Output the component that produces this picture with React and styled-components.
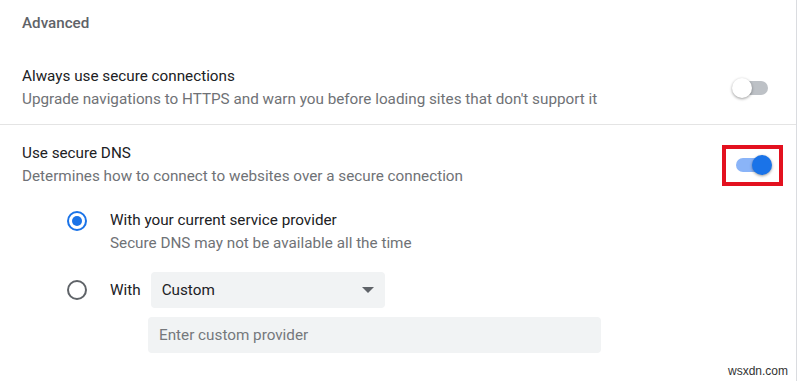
import React from "react";
import styled, { createGlobalStyle } from "styled-components";

const GlobalStyle = createGlobalStyle`
  html, body {
    margin: 0;
    padding: 0;
    background: #ffffff;
  }
  body {
    font-family: Roboto, "Noto Sans", Arial, sans-serif;
  }
`;

const Page = styled.div`
  width: 800px;
  height: 381px;
  display: flex;
  background: #fff;
  overflow: hidden;
  position: relative;
`;

const Panel = styled.div`
  width: 796px;
  border-right: 1px solid #dadce0;
  display: flex;
  flex-direction: column;
`;

const SectionTitle = styled.div`
  padding: 14px 22px 0;
  height: 43px;
  box-sizing: border-box;
  font-size: 15.2px;
  font-weight: 500;
  color: #5f6368;
`;

const Row = styled.div`
  display: flex;
  align-items: center;
  justify-content: space-between;
  padding: ${(p) => p.$pad || "0 22px"};
  height: ${(p) => p.$height}px;
  box-sizing: border-box;
  border-bottom: ${(p) => (p.$divider ? "1px solid #e4e4e4" : "none")};
`;

const TextCol = styled.div`
  display: flex;
  flex-direction: column;
  gap: 5px;
`;

const Label = styled.div`
  font-size: 15.25px;
  color: #202124;
  margin-left: ${(p) => p.$ml || 0}px;
`;

const Sub = styled.div`
  font-size: 15.25px;
  color: #6f7276;
`;

const Toggle = styled.div`
  position: relative;
  width: 34px;
  height: 14px;
  border-radius: 7px;
  background: ${(p) => (p.$on ? "#8ab4f8" : "#bdc1c6")};
  margin-right: ${(p) => p.$mr || 0}px;
  &::after {
    content: "";
    position: absolute;
    top: -3px;
    left: ${(p) => (p.$on ? "16px" : "-2px")};
    width: 20px;
    height: 20px;
    border-radius: 50%;
    background: ${(p) => (p.$on ? "#1a73e8" : "#ffffff")};
    box-shadow: 0 1px 3px rgba(0, 0, 0, 0.4);
  }
`;

const Highlight = styled.div`
  width: 61px;
  height: 41px;
  box-sizing: border-box;
  border: 4px solid #e3111f;
  display: flex;
  align-items: center;
  justify-content: center;
  margin-top: 1px;
`;

const Options = styled.div`
  display: flex;
  flex-direction: column;
  padding-left: 67px;
  margin-top: 7px;
`;

const OptionRow = styled.div`
  display: flex;
  align-items: flex-start;
  gap: 23px;
  margin-top: ${(p) => p.$mt || 0}px;
`;

const Radio = styled.div`
  width: 20px;
  height: 20px;
  box-sizing: border-box;
  border-radius: 50%;
  border: 2px solid ${(p) => (p.$checked ? "#1a73e8" : "#5f6368")};
  display: flex;
  align-items: center;
  justify-content: center;
  flex-shrink: 0;
  &::after {
    content: "";
    width: 10px;
    height: 10px;
    border-radius: 50%;
    background: ${(p) => (p.$checked ? "#1a73e8" : "transparent")};
  }
`;

const CustomCol = styled.div`
  display: flex;
  flex-direction: column;
  gap: 9px;
`;

const SelectLine = styled.div`
  display: flex;
  align-items: center;
  gap: 10px;
`;

const Select = styled.div`
  width: 234px;
  height: 36px;
  border-radius: 4px;
  background: #f1f3f4;
  box-sizing: border-box;
  padding: 0 11px;
  display: flex;
  align-items: center;
  justify-content: space-between;
  font-size: 15.25px;
  color: #202124;
`;

const Caret = styled.div`
  width: 0;
  height: 0;
  border-left: 6px solid transparent;
  border-right: 6px solid transparent;
  border-top: 6px solid #5f6368;
`;

const Input = styled.div`
  margin-left: 81px;
  width: 453px;
  height: 36px;
  border-radius: 4px;
  background: #f1f3f4;
  box-sizing: border-box;
  padding: 0 11px;
  display: flex;
  align-items: center;
  font-size: 15.25px;
  color: #75787c;
`;

const Watermark = styled.div`
  position: absolute;
  right: 12px;
  bottom: 3px;
  font-family: "Liberation Sans", Arial, sans-serif;
  font-size: 12px;
  color: #333;
`;

export default function App() {
  return (
    <Page>
      <GlobalStyle />
      <Panel>
        <SectionTitle>Advanced</SectionTitle>
        <Row $height={82} $pad="8px 22px 0" $divider>
          <TextCol>
            <Label>Always use secure connections</Label>
            <Sub>Upgrade navigations to HTTPS and warn you before loading sites that don't support it</Sub>
          </TextCol>
          <Toggle $mr={6} />
        </Row>
        <Row $height={79} $pad="0 13px 0 22px">
          <TextCol>
            <Label>Use secure DNS</Label>
            <Sub>Determines how to connect to websites over a secure connection</Sub>
          </TextCol>
          <Highlight>
            <Toggle $on />
          </Highlight>
        </Row>
        <Options>
          <OptionRow>
            <Radio $checked />
            <TextCol>
              <Label>With your current service provider</Label>
              <Sub>Secure DNS may not be available all the time</Sub>
            </TextCol>
          </OptionRow>
          <OptionRow $mt={20}>
            <CustomCol>
              <SelectLine>
                <Radio />
                <Label $ml={13}>With</Label>
                <Select>
                  Custom
                  <Caret />
                </Select>
              </SelectLine>
              <Input>Enter custom provider</Input>
            </CustomCol>
          </OptionRow>
        </Options>
      </Panel>
      <Watermark>wsxdn.com</Watermark>
    </Page>
  );
}
